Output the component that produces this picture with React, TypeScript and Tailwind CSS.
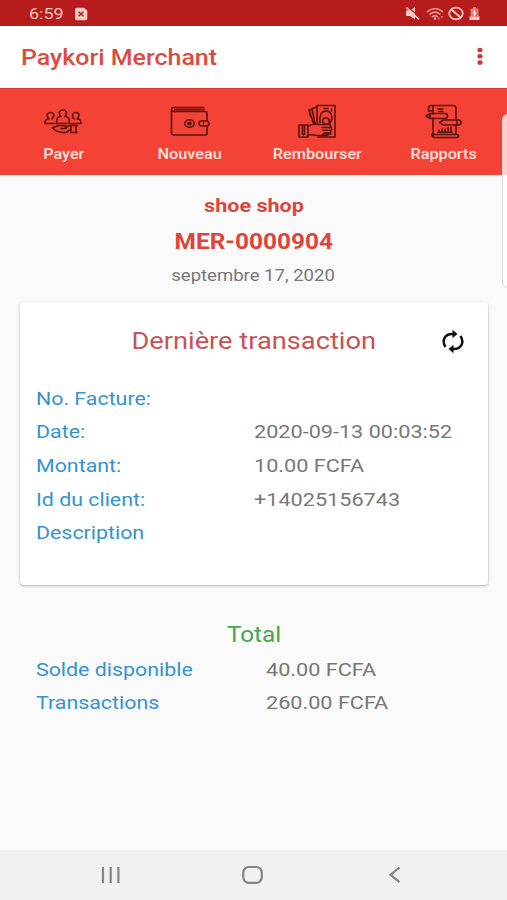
import type { ReactNode } from 'react';

const details = [
  { label: 'No. Facture:', value: '' },
  { label: 'Date:', value: '2020-09-13 00:03:52' },
  { label: 'Montant:', value: '10.00 FCFA' },
  { label: 'Id du client:', value: '+14025156743' },
  { label: 'Description', value: '' },
];

const totals = [
  { label: 'Solde disponible', value: '40.00 FCFA' },
  { label: 'Transactions', value: '260.00 FCFA' },
];

function StatusBar() {
  return (
    <div className="h-[26px] bg-[#b71c1c] flex items-center justify-between pl-[29px] pr-[26px] text-[#ffc9c4]">
      <div className="flex items-center pt-[3px]">
        <span className="w-[45px] text-[15.500px] leading-none"><span className="inline-block origin-left scale-x-[1.16]">6:59</span></span>
        <svg width="14" height="14" viewBox="0 0 14 14" className="-mt-[2px]">
          <path d="M1 2.5A1.8 1.8 0 0 1 2.8.7H10l3.3 3v7.8a1.8 1.8 0 0 1-1.8 1.8H2.8A1.8 1.8 0 0 1 1 11.500Z" fill="currentColor" />
          <path d="m4.500 4.700 5 4.600m0-4.600-5 4.600" stroke="#9d2020" strokeWidth="1.500" />
        </svg>
      </div>
      <svg width="76" height="16" viewBox="0 0 76 16" fill="none" className="mt-px">
        <path d="M1 4.500h4l5-3.500v12.500L5 10H1Z" fill="currentColor" />
        <path d="M2.500.5 15 11.500" stroke="#b71c1c" strokeWidth="1.200" />
        <path d="m1.500 1.500 12.500 12" stroke="currentColor" strokeWidth="1.700" />
        <g stroke="#f5a39e" strokeWidth="1.500">
          <path d="M22 6c5-4.500 11-4.500 16 0" />
          <path d="M24.500 8.500c3.500-3 7.500-3 11 0" />
          <path d="M27 11c2-1.700 4-1.700 6 0" />
        </g>
        <circle cx="30" cy="12.500" r="1.300" fill="#f5a39e" />
        <path d="m32.500 13.500 1.500-2.500 1.500 2.500Zm3-3.500 1.500 3 1.500-3Z" fill="#e5605c" />
        <ellipse cx="51" cy="7.500" rx="6.800" ry="5.800" stroke="currentColor" strokeWidth="1.700" />
        <path d="m46.500 3.500 9 8" stroke="currentColor" strokeWidth="1.700" />
        <path d="M66.500 2.500H68V1h3v1.500h1.500q1 0 1 1v7h-8v-7q0-1 1-1Z" fill="#dc7d79" />
        <path d="M64.500 10.500h10V14h-10Z" fill="currentColor" />
        <path d="m70 3-2.500 4.500H69l-.5 4 3-5H70Z" fill="#fff0ed" />
      </svg>
    </div>
  );
}

function PeopleIcon() {
  return (
    <svg width="38" height="26" viewBox="0 0 38 26" fill="none" stroke="currentColor" strokeWidth="1.600" strokeLinejoin="round" strokeLinecap="round">
      <path d="M5 10C1.500 6 3.500 3.500 6.500 3.500S11.500 6 8 10M5 10c-3 0-4 1-4 4.500h9.500" />
      <path d="M30 10c-3-4-1-6.500 2-6.500S36.500 6 33 10c3 0 4 1 4 4.500h-9.500" />
      <path d="M17 7.500c-3.500-4-1-6.500 2-6.500s5 2.500 2 6.500c3 0 4.500 1 4.500 7h-13c0-6 1.500-7 4.500-7" />
      <path d="M8.500 18.500c3 0 4.500-2.500 8-2l5 .5c2 .3 1.500 2.500-.5 2.500h-4M8.500 19c4 4 8 5 13.500 4.500l4-2.500M21.500 18l5-1.500h7M27 16v8m5-8v8m-5-.5h6" />
    </svg>
  );
}

function WalletIcon() {
  return (
    <svg width="40" height="32" viewBox="0 0 40 32" fill="none" stroke="currentColor" strokeWidth="1.600" strokeLinejoin="round">
      <path d="M1.500 4v23q0 2 2 2h32q1.500 0 1.500-1.500v-8M37 15V7q0-1.500-1.500-1.500H4Q1.500 5.500 1.500 3.500t2-2h30v4" />
      <path d="M4 3.600h28" />
      <ellipse cx="19.500" cy="17.500" rx="4.700" ry="3.700" />
      <ellipse cx="19.500" cy="17.500" rx="1.500" ry="1.200" fill="currentColor" />
      <rect x="29" y="15" width="10" height="5" rx="2.500" />
      <path d="M33.500 15v5" strokeWidth=".8" />
    </svg>
  );
}

function CashIcon() {
  return (
    <svg width="38" height="35" viewBox="0 0 38 35" fill="none" stroke="currentColor" strokeWidth="1.600" strokeLinejoin="round" strokeLinecap="round">
      <path d="M19 20V1.500h18V33H20" />
      <path d="m19 3-5 1.500L17 20M14 6l-3-.5 1 3 3.500 11M11 5.500l1.500 7M22 19c-.5-4-.5-6 1-9 2-4 8-4 10 0 1 2 1 6-1 9" />
      <circle cx="28" cy="17" r="3.300" />
      <path d="M26 4.500h4M33.500 5v2M25 30h8" />
      <path d="M1 21h9v12H1ZM4.500 21v9q1 2 2 0v-9M10 22c5-2.500 7-2 11-1.500h11q1.500 1.500 0 3h-8m1 0h8q1.500 1.300 0 2.800h-8m1 0h6q1.500 1.300 0 2.700h-6m0 0h4q1 1.500-1 2.500H19c-3.500 0-5-1-9-1" />
    </svg>
  );
}

function ReportIcon() {
  return (
    <svg width="37" height="35" viewBox="0 0 37 35" fill="none" stroke="currentColor" strokeWidth="1.600" strokeLinejoin="round" strokeLinecap="round">
      <path d="M8 10V3.500Q8 1.500 6 1.500T3.500 4v3H8M6 1.500h22q3 0 3 3V15M8 14v18M31 21v9" />
      <path d="M13 5h5m-4 2.500h4" />
      <path d="m1 12 4-2.500h15q2.500 0 2.500 2.500t-2.500 2.500H5ZM5 9.500v5" />
      <path d="m14.500 18.500 4-2.500h15q2.500 0 2.500 2.500T33.500 21h-15ZM32 16v5" />
      <path d="M14 28v-2m3 2v-3m3 3v-3m3 3v-4m3 4v-5M13 28.300h14" />
      <path d="M8 30.500h24q1.500 0 1.500 1.500t-2.500 1.500H10Q7 33.500 7 30" />
    </svg>
  );
}

function NavItem({ icon, children }: { icon: ReactNode; children: ReactNode }) {
  return (
    <div className="flex-1 flex flex-col items-center">
      <div className="h-[56px] pb-px flex items-center justify-center pt-[10px] text-[#5a140f]">{icon}</div>
      <span className="text-[14px] leading-[18px] font-medium text-[#ffe3df] scale-x-[1.16] whitespace-nowrap">{children}</span>
    </div>
  );
}

function Row({ label, value, offset }: { label: string; value: string; offset: string }) {
  return (
    <div className="flex h-[33.700px] items-center text-[18.500px] leading-none whitespace-nowrap">
      <div className={offset}><span className="inline-block origin-left scale-x-[1.155] text-[#3493cf]">{label}</span></div>
      <div><span className="inline-block origin-left scale-x-[1.17] text-[#777777]">{value}</span></div>
    </div>
  );
}

export default function App() {
  return (
    <div className="relative w-[507px] h-[900px] overflow-hidden flex flex-col bg-[#fafafa] font-['Roboto',sans-serif]">
      <StatusBar />

      <header className="h-[62px] bg-white flex items-center justify-between pl-[20.500px] pr-[24px]">
        <h1 className="pt-[2px] text-[21.500px] leading-none font-medium text-[#dc4a40] origin-left scale-x-[1.16] whitespace-nowrap">Paykori Merchant</h1>
        <svg width="6" height="20" viewBox="0 0 6 20" fill="#c9393b">
          <ellipse cx="3" cy="3" rx="2.600" ry="2.300" />
          <ellipse cx="3" cy="9.300" rx="2.600" ry="2.300" />
          <ellipse cx="3" cy="15.600" rx="2.600" ry="2.300" />
        </svg>
      </header>

      <nav className="h-[87px] bg-[#f44336] border-t border-[#d94035] flex">
        <NavItem icon={<PeopleIcon />}>Payer</NavItem>
        <NavItem icon={<WalletIcon />}>Nouveau</NavItem>
        <NavItem icon={<CashIcon />}>Rembourser</NavItem>
        <NavItem icon={<ReportIcon />}>Rapports</NavItem>
      </nav>

      <section className="h-[127px] flex flex-col items-center pt-[14px] text-[#dc453c]">
        <p className="text-[19px] leading-[34px] font-bold scale-x-[1.135]">shoe shop</p>
        <p className="text-[21.500px] leading-[37px] font-bold scale-x-[1.135]">MER-0000904</p>
        <p className="text-[17px] leading-[30px] text-[#777777] scale-x-[1.09]">septembre 17, 2020</p>
      </section>

      <section className="ml-5 w-[468px] h-[283px] bg-white rounded-[4px] shadow-[0_1px_3px_rgba(0,0,0,0.3)] px-4">
        <div className="h-[80px] relative flex justify-center items-center pb-[3px]">
          <h2 className="text-[24px] leading-none text-[#c65357] scale-x-[1.135] whitespace-nowrap">Dernière transaction</h2>
          <svg className="absolute left-[406px] top-[27px]" width="22" height="25" viewBox="0 0 22 25" fill="none" stroke="#111" strokeWidth="2.500">
            <path d="M3.500 18C-.5 12 2.500 5 10 5h3M18.500 7c4 6 1 13-6.500 13H9" />
            <path d="m10.500 .8 5 4.200-5 4.200ZM11.500 15.800 6.500 20l5 4.200Z" fill="#111" stroke="none" />
          </svg>
        </div>
        {details.map((d) => <Row key={d.label} {...d} offset="w-[218px]" />)}
      </section>

      <section className="pt-[32px] pl-9">
        <h2 className="-ml-9 w-[508px] h-[36px] text-center text-[21.500px] leading-[36px] text-[#45a64a]"><span className="inline-block scale-x-[1.13]">Total</span></h2>
        {totals.map((t) => <Row key={t.label} {...t} offset="w-[230px]" />)}
      </section>

      <footer className="mt-auto h-[50px] bg-[#f1f1f1]">
        <svg width="507" height="50" viewBox="0 0 507 50" fill="none" stroke="#858585" strokeWidth="2.200">
          <path d="M103 17v16m7.700-16v16m7.700-16v16" />
          <rect x="243.300" y="17" width="18.500" height="15.800" rx="5.500" />
          <path d="m399.500 17.500-9 7.300 9 7.300" />
        </svg>
      </footer>

      {/* edge panel handle */}
      <div className="absolute top-[114px] left-[502px] w-[10px] h-[174px] rounded-l-[6px] border border-[#d5d5d5]/80 bg-white/75" />
    </div>
  );
}
